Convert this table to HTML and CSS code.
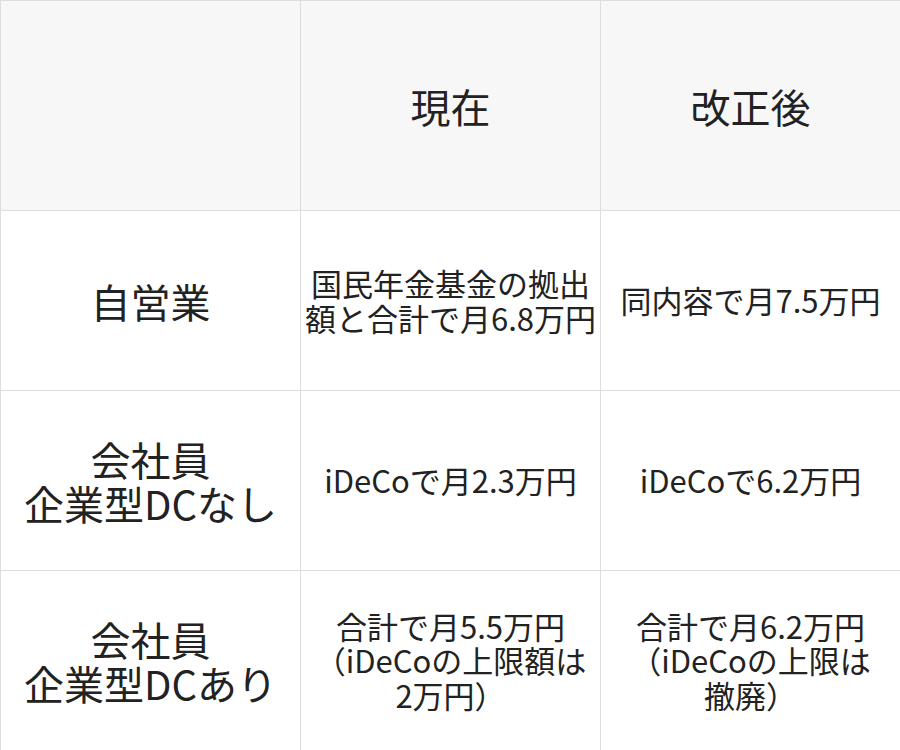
FILE: index.html
```html
<!DOCTYPE html>
<html lang="ja">
<head>
<meta charset="utf-8">
<link rel="stylesheet" href="styles.css">
</head>
<body>
<table class="compare">
  <colgroup><col class="c"><col class="c"><col class="c"></colgroup>
  <thead>
    <tr class="head-row">
      <th class="head"></th>
      <th class="head">現在</th>
      <th class="head">改正後</th>
    </tr>
  </thead>
  <tbody>
    <tr class="body-row">
      <td class="label">自営業</td>
      <td class="val">国民年金基金の拠出<br>額と合計で月6.8万円</td>
      <td class="val">同内容で月7.5万円</td>
    </tr>
    <tr class="body-row">
      <td class="label">会社員<br>企業型DCなし</td>
      <td class="val">iDeCoで月2.3万円</td>
      <td class="val">iDeCoで6.2万円</td>
    </tr>
    <tr class="body-row">
      <td class="label">会社員<br>企業型DCあり</td>
      <td class="val">合計で月5.5万円<br>（iDeCoの上限額は<br>2万円）</td>
      <td class="val">合計で月6.2万円<br>（iDeCoの上限は<br>撤廃）</td>
    </tr>
  </tbody>
</table>
</body>
</html>
```
FILE: styles.css
```css
html, body {
  margin: 0;
  padding: 0;
  background: #ffffff;
}
body {
  font-family: "Noto Sans CJK JP", "Noto Sans", sans-serif;
  color: #222222;
}
.compare {
  width: 900px;
  table-layout: fixed;
  border-collapse: collapse;
}
.c {
  width: 300px;
}
.head-row {
  height: 210px;
}
.body-row {
  height: 180px;
}
.head,
.label,
.val {
  border: 1px solid #dddddd;
  text-align: center;
  vertical-align: middle;
  padding: 0 4px;
  line-height: 1.1;
}
.head {
  background: #f7f7f7;
  font-size: 40px;
  font-weight: 400;
}
.label {
  font-size: 40px;
}
.val {
  font-size: 31px;
  white-space: nowrap;
}
```
